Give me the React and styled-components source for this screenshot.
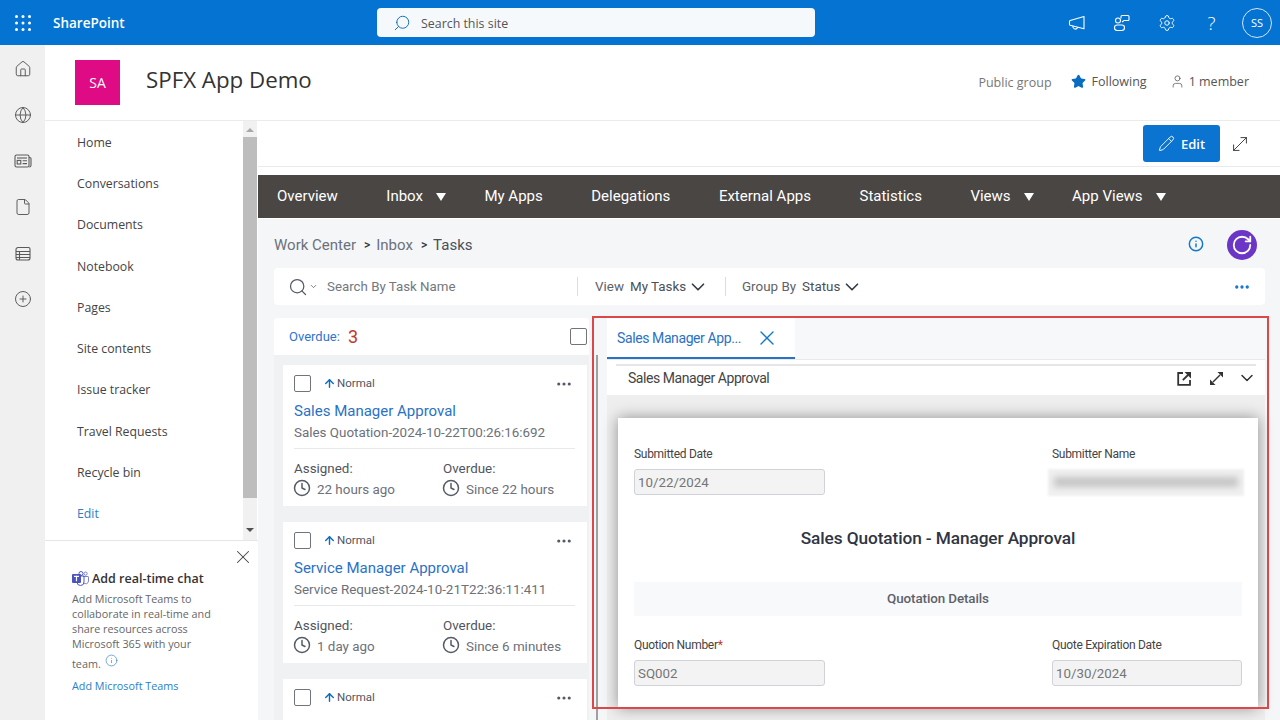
import React from 'react'
import styled, { createGlobalStyle } from 'styled-components'
import {
  Home, Globe, File, CirclePlus, Search, Settings, Star, User,
  Pencil, MoveDiagonal, X, Info, RotateCw, ChevronDown, ArrowUp, Clock, MoreHorizontal,
} from 'lucide-react'

const SP_FONT = `"Open Sans", "Noto Sans", sans-serif`
const APP_FONT = `Roboto, "Liberation Sans", sans-serif`

const navLinks = ['Home', 'Conversations', 'Documents', 'Notebook', 'Pages', 'Site contents', 'Issue tracker', 'Travel Requests', 'Recycle bin']
const menuItems = [
  { label: 'Overview' },
  { label: 'Inbox', caret: true },
  { label: 'My Apps' },
  { label: 'Delegations' },
  { label: 'External Apps' },
  { label: 'Statistics' },
  { label: 'Views', caret: true },
  { label: 'App Views', caret: true },
]
const tasks = [
  { title: 'Sales Manager Approval', sub: 'Sales Quotation-2024-10-22T00:26:16:692', assigned: '22 hours ago', overdue: 'Since 22 hours' },
  { title: 'Service Manager Approval', sub: 'Service Request-2024-10-21T22:36:11:411', assigned: '1 day ago', overdue: 'Since 6 minutes' },
  { title: null },
]

const Waffle = () => (
  <svg width="16" height="16" viewBox="0 0 16 16" fill="#fff">
    {[1.5, 8, 14.5].map(y => [1.5, 8, 14.5].map(x => <circle key={`${x}-${y}`} cx={x} cy={y} r="1.5" />))}
  </svg>
)

const Horn = () => (
  <svg width="18" height="18" viewBox="0 0 18 18" fill="none" stroke="#fff" strokeWidth="1.1" strokeLinejoin="round">
    <path d="M16 2.5v12.2L2.2 11.2a1 1 0 0 1-.7-1V7.6a1 1 0 0 1 .7-1z" />
    <path d="M5 12a2.4 2.4 0 0 0 4.7 1.2" />
  </svg>
)

const ChatBubbles = () => (
  <svg width="18" height="18" viewBox="0 0 18 18" fill="none" stroke="#fff" strokeWidth="1.1">
    <circle cx="5" cy="6.5" r="2.5" />
    <path d="M8 4.5V2.5a1 1 0 0 1 1-1h6a1 1 0 0 1 1 1v3a1 1 0 0 1-1 1h-4l-2 1.5" />
    <rect x="1.5" y="11" width="10" height="5.5" rx="2.7" />
  </svg>
)

const NewsCard = () => (
  <svg width="18" height="18" viewBox="0 0 18 18" fill="none" stroke="#5a5a5a" strokeWidth="1.1">
    <rect x="1" y="3" width="14" height="12" rx="1.6" />
    <path d="M15 5.5h.7a1.3 1.3 0 0 1 1.3 1.3v6.4a1.8 1.8 0 0 1-1.8 1.8" />
    <path d="M3 6h10" />
    <rect x="3.2" y="8.4" width="3.6" height="3.6" />
    <path d="M8.6 8.8h4.4M8.6 11.6h4.4" />
  </svg>
)

const ListTable = () => (
  <svg width="18" height="18" viewBox="0 0 18 18" fill="none" stroke="#5a5a5a" strokeWidth="1.1">
    <path d="M4 3.5 h10.5a1.5 1.5 0 0 1 1.5 1.5v9a2 2 0 0 1-2 2H4a2 2 0 0 1-2-2V5.5a2 2 0 0 1 2-2z" />
    <path d="M2 7.5h14M2 10.5h14M2 13.5h14M5.5 7.5V16" />
  </svg>
)

const OpenOut = () => (
  <svg width="15" height="15" viewBox="0 0 15 15" fill="none" stroke="#333" strokeWidth="1.8">
    <path d="M6 2H1.2v11.8H13V9" />
    <path d="M5.8 9.2 11 4" />
    <path d="M7.5 1h6.5v6.5z" fill="#333" stroke="none" />
  </svg>
)

const ExpandArrows = () => (
  <svg width="15" height="15" viewBox="0 0 15 15" fill="none" stroke="#333" strokeWidth="1.5">
    <path d="M4 11 11 4" />
    <path d="M8.5 1H14v5.5z" fill="#333" stroke="none" />
    <path d="M1 8.5V14h5.5z" fill="#333" stroke="none" />
  </svg>
)

const TeamsLogo = () => (
  <svg width="17" height="15" viewBox="0 0 17 15">
    <circle cx="13.6" cy="2.6" r="1.6" fill="none" stroke="#7b83c9" strokeWidth="1" />
    <path d="M11 5.5h5a.6.6 0 0 1 .5.6v4a2.8 2.8 0 0 1-5 1.6" fill="none" stroke="#7b83c9" strokeWidth="1" />
    <circle cx="9" cy="2.5" r="2" fill="none" stroke="#5059c9" strokeWidth="1" />
    <path d="M5 5h7v6a3.5 3.5 0 0 1-7 0z" fill="none" stroke="#5059c9" strokeWidth="1" />
    <rect x="0" y="3" width="9" height="9" rx="1" fill="#4b53bc" />
    <rect x="2" y="4.8" width="5" height="1.2" fill="#fff" />
    <rect x="3.9" y="4.8" width="1.2" height="5.4" fill="#fff" />
  </svg>
)

const App = () => {
  return (
    <Page>
      <GlobalStyle />
      <TopBar>
        <WaffleCell><Waffle /></WaffleCell>
        <Brand>SharePoint</Brand>
        <SearchBar>
          <FlippedIcon><Search size={18} strokeWidth={1.25} color="#0a6cc0" /></FlippedIcon>
          <SearchText>Search this site</SearchText>
        </SearchBar>
        <TopIcons>
          <TopIcon><Horn /></TopIcon>
          <TopIcon><ChatBubbles /></TopIcon>
          <TopIcon><Settings size={18} strokeWidth={1.25} color="#fff" /></TopIcon>
          <TopIcon><HelpMark>?</HelpMark></TopIcon>
          <Avatar>SS</Avatar>
        </TopIcons>
      </TopBar>

      <Body>
        <Rail>
          <Home size={18} strokeWidth={1.3} />
          <Globe size={18} strokeWidth={1.3} />
          <NewsCard />
          <File size={18} strokeWidth={1.3} />
          <ListTable />
          <CirclePlus size={18} strokeWidth={1.3} />
        </Rail>

        <Site>
          <SiteHeader>
            <SiteLogo>SA</SiteLogo>
            <SiteTitle>SPFX App Demo</SiteTitle>
            <SiteMeta>
              <PublicGroup>Public group</PublicGroup>
              <MetaItem><Star size={15} fill="#0a6cc0" color="#0a6cc0" />Following</MetaItem>
              <MetaItem $gap={4}><User size={15} strokeWidth={1.2} />1 member</MetaItem>
            </SiteMeta>
          </SiteHeader>

          <Columns>
            <SideNav>
              <NavScroll>
                <NavList>
                  {navLinks.map(link => <NavLink key={link}>{link}</NavLink>)}
                  <NavLink $edit>Edit</NavLink>
                </NavList>
                <ScrollBar>
                  <ArrowUpMark />
                  <ScrollThumb />
                  <ArrowDownMark />
                </ScrollBar>
              </NavScroll>
              <Promo>
                <PromoClose><X size={22} strokeWidth={1.1} /></PromoClose>
                <PromoTitle><TeamsLogo />Add real-time chat</PromoTitle>
                <PromoText>
                  Add Microsoft Teams to collaborate in real-time and share resources across Microsoft 365 with your{' '}
                  <PromoLast>team.<Info size={13} strokeWidth={1.2} color="#2a7fc9" /></PromoLast>
                </PromoText>
                <PromoLink>Add Microsoft Teams</PromoLink>
              </Promo>
            </SideNav>

            <Main>
              <EditBar>
                <EditButton><Pencil size={17} strokeWidth={1.3} />Edit</EditButton>
                <MoveDiagonal size={22} strokeWidth={1} color="#333" />
              </EditBar>

              <MenuBar>
                {menuItems.map(item => (
                  <MenuItem key={item.label}>
                    {item.label}
                    {item.caret && <Caret />}
                  </MenuItem>
                ))}
              </MenuBar>

              <Content>
                <CrumbRow>
                  <Crumbs>
                    <span>Work Center</span><Sep>&gt;</Sep><span>Inbox</span><Sep>&gt;</Sep><CrumbNow>Tasks</CrumbNow>
                  </Crumbs>
                  <Info size={16} strokeWidth={2.2} color="#1478c8" />
                  <RefreshButton><RotateCw size={22} strokeWidth={2} color="#fff" /></RefreshButton>
                </CrumbRow>

                <Toolbar>
                  <SearchCell>
                    <Search size={20} strokeWidth={1.5} color="#555b66" />
                    <ChevronDown size={9} strokeWidth={2} color="#555b66" />
                    <SearchHint>Search By Task Name</SearchHint>
                  </SearchCell>
                  <FilterCell $width={147}>
                    <FilterName>View</FilterName>
                    <FilterValue>My Tasks</FilterValue>
                    <ChevronDown size={22} strokeWidth={1.8} color="#333a45" />
                  </FilterCell>
                  <FilterCell $width={150}>
                    <FilterName>Group By</FilterName>
                    <FilterValue>Status</FilterValue>
                    <ChevronDown size={22} strokeWidth={1.8} color="#333a45" />
                  </FilterCell>
                  <ToolbarDots><MoreHorizontal size={18} strokeWidth={2.4} color="#1478c8" /></ToolbarDots>
                </Toolbar>

                <Panes>
                  <TaskPane>
                    <TaskHead>
                      <OverdueLabel>Overdue:</OverdueLabel>
                      <OverdueCount>3</OverdueCount>
                      <HeadCheck />
                    </TaskHead>
                    <TaskList>
                      {tasks.map((task, i) => (
                        <TaskCard key={i}>
                          <CardTop>
                            <Check />
                            <ArrowUp size={13} strokeWidth={2.6} color="#0a6cc0" />
                            <Priority>Normal</Priority>
                            <CardDots><MoreHorizontal size={18} strokeWidth={2.2} color="#555b66" /></CardDots>
                          </CardTop>
                          {task.title && (
                            <>
                              <CardTitle>{task.title}</CardTitle>
                              <CardSub>{task.sub}</CardSub>
                              <CardRule />
                              <CardTimes>
                                <TimeCol>
                                  <TimeLabel>Assigned:</TimeLabel>
                                  <TimeValue><Clock size={18} strokeWidth={2} color="#555b66" />{task.assigned}</TimeValue>
                                </TimeCol>
                                <TimeCol>
                                  <TimeLabel>Overdue:</TimeLabel>
                                  <TimeValue><Clock size={18} strokeWidth={2} color="#555b66" />{task.overdue}</TimeValue>
                                </TimeCol>
                              </CardTimes>
                            </>
                          )}
                        </TaskCard>
                      ))}
                    </TaskList>
                  </TaskPane>

                  <ScrollLine />

                  <DetailPane>
                    <TabStrip>
                      <Tab>
                        <TabLabel>Sales Manager App...</TabLabel>
                        <X size={24} strokeWidth={1.4} color="#1478c8" />
                      </Tab>
                    </TabStrip>
                    <PanelHeader>
                      <PanelRow>
                        <PanelTitle>Sales Manager Approval</PanelTitle>
                        <PanelIcons>
                          <OpenOut />
                          <ExpandArrows />
                          <ChevronDown size={20} strokeWidth={1.8} color="#333" />
                        </PanelIcons>
                      </PanelRow>
                    </PanelHeader>
                    <FormArea>
                      <FormCard>
                        <FieldRow>
                          <Field>
                            <FieldLabel>Submitted Date</FieldLabel>
                            <FieldBox>10/22/2024</FieldBox>
                          </Field>
                          <Field>
                            <FieldLabel>Submitter Name</FieldLabel>
                            <Redacted><RedactedInk /></Redacted>
                          </Field>
                        </FieldRow>
                        <FormTitle>Sales Quotation - Manager Approval</FormTitle>
                        <SectionBand>Quotation Details</SectionBand>
                        <FieldRow $second>
                          <Field>
                            <FieldLabel>Quotion Number<Required>*</Required></FieldLabel>
                            <FieldBox>SQ002</FieldBox>
                          </Field>
                          <Field>
                            <FieldLabel>Quote Expiration Date</FieldLabel>
                            <FieldBox>10/30/2024</FieldBox>
                          </Field>
                        </FieldRow>
                      </FormCard>
                    </FormArea>
                  </DetailPane>
                </Panes>
              </Content>
            </Main>
          </Columns>
        </Site>
      </Body>
      <Highlight />
    </Page>
  )
}

export default App

const GlobalStyle = createGlobalStyle`
  html, body {
    margin: 0;
    width: 1280px;
    height: 720px;
    overflow: hidden;
    background: #fff;
  }
  * { box-sizing: border-box; }
`
const Page = styled.div`
  position: relative;
  width: 1280px;
  height: 720px;
  overflow: hidden;
  display: flex;
  flex-direction: column;
  font-family: ${SP_FONT};
`
const TopBar = styled.header`
  height: 45px;
  flex: none;
  background: #0473d1;
  display: flex;
  align-items: center;
  color: #fff;
`
const WaffleCell = styled.div`
  width: 45px;
  display: flex;
  justify-content: center;
`
const Brand = styled.div`
  width: 332px;
  padding-left: 8px;
  font-size: 13.5px;
  font-weight: 600;
`
const SearchBar = styled.div`
  width: 438px;
  height: 29px;
  background: #f6f9fc;
  border-radius: 4px;
  display: flex;
  align-items: center;
  gap: 10px;
  padding-left: 16px;
  color: #555;
  font-size: 12.4px;
`
const SearchText = styled.span`
  margin-top: 2px;
`
const FlippedIcon = styled.span`
  display: flex;
  transform: scaleX(-1);
`
const TopIcons = styled.div`
  margin-left: auto;
  display: flex;
  align-items: center;
  padding-right: 8px;
`
const TopIcon = styled.div`
  width: 45px;
  display: flex;
  justify-content: center;
`
const HelpMark = styled.span`
  font-size: 19px;
  font-weight: 300;
  line-height: 18px;
`
const Avatar = styled.div`
  width: 30px;
  height: 30px;
  margin-left: 8px;
  border: 1px solid #d5e6f6;
  border-radius: 50%;
  display: flex;
  align-items: center;
  justify-content: center;
  font-size: 11px;
`
const Body = styled.div`
  flex: 1;
  min-height: 0;
  display: flex;
`
const Rail = styled.nav`
  width: 45px;
  flex: none;
  background: #f0f0f0;
  color: #5a5a5a;
  display: flex;
  flex-direction: column;
  align-items: center;
  gap: 28.1px;
  padding-top: 15px;
`
const Site = styled.div`
  flex: 1;
  min-width: 0;
  display: flex;
  flex-direction: column;
`
const SiteHeader = styled.div`
  height: 76px;
  flex: none;
  border-bottom: 1px solid #ebebeb;
  padding: 15px 31px 0 30px;
  display: flex;
  align-items: flex-start;
`
const SiteLogo = styled.div`
  width: 45px;
  height: 45px;
  background: #de0b85;
  color: #fff;
  font-size: 14px;
  display: flex;
  align-items: center;
  justify-content: center;
`
const SiteTitle = styled.div`
  margin: 4px 0 0 26px;
  font-size: 22.3px;
  font-weight: 500;
  color: #333;
`
const SiteMeta = styled.div`
  margin-left: auto;
  padding-top: 11px;
  display: flex;
  align-items: center;
  font-size: 12.5px;
  color: #555;
`
const PublicGroup = styled.span`
  color: #777;
  margin-top: 3px;
`
const MetaItem = styled.span`
  display: flex;
  align-items: center;
  gap: ${p => p.$gap || 6}px;
  margin-left: 19px;

  & + & { margin-left: 23px; }
`
const Columns = styled.div`
  flex: 1;
  min-height: 0;
  display: flex;
`
const SideNav = styled.aside`
  width: 213px;
  flex: none;
  display: flex;
  flex-direction: column;
`
const NavScroll = styled.div`
  height: 420px;
  flex: none;
  border-bottom: 1px solid #e6e6e6;
  display: flex;
`
const NavList = styled.div`
  flex: 1;
  padding: 0.5px 0 0 32px;
`
const NavLink = styled.div`
  height: 41.3px;
  display: flex;
  align-items: center;
  font-size: 12.3px;
  color: ${p => (p.$edit ? '#2a7fc9' : '#444')};
`
const ScrollBar = styled.div`
  width: 14px;
  margin-right: 1px;
  background: #f1f1f1;
  display: flex;
  flex-direction: column;
  align-items: center;
  padding-top: 7px;
`
const ArrowUpMark = styled.div`
  border: 4px solid transparent;
  border-top: 0;
  border-bottom: 4px solid #a8a8a8;
`
const ScrollThumb = styled.div`
  width: 100%;
  height: 361px;
  margin: 5px 0 30px;
  background: #bdbdbd;
`
const ArrowDownMark = styled.div`
  border: 4px solid transparent;
  border-bottom: 0;
  border-top: 4px solid #505050;
`
const Promo = styled.div`
  position: relative;
  flex: 1;
  padding: 29px 40px 0 27px;
`
const PromoClose = styled.div`
  position: absolute;
  top: 5px;
  right: 4px;
  color: #444;
  display: flex;
`
const PromoTitle = styled.div`
  display: flex;
  align-items: center;
  gap: 3px;
  font-size: 12.5px;
  font-weight: 600;
  white-space: nowrap;
  color: #333;
  margin-bottom: 4px;
`
const PromoText = styled.div`
  font-size: 10.8px;
  line-height: 15px;
  color: #666;
`
const PromoLast = styled.span`
  display: inline-block;
  margin-top: 3px;

  svg {
    margin-left: 4px;
    vertical-align: 1px;
  }
`
const PromoLink = styled.div`
  margin-top: 7px;
  font-size: 10.8px;
  color: #2a7fc9;
`
const Main = styled.main`
  flex: 1;
  min-width: 0;
  display: flex;
  flex-direction: column;
`
const EditBar = styled.div`
  height: 46px;
  flex: none;
  border-bottom: 1px solid #ebebeb;
  display: flex;
  align-items: center;
  justify-content: flex-end;
  gap: 9px;
  padding-right: 29px;
`
const EditButton = styled.div`
  width: 77px;
  height: 37px;
  background: #0a74d0;
  border-radius: 3px;
  color: #fff;
  font-size: 13px;
  font-weight: 600;
  display: flex;
  align-items: center;
  justify-content: center;
  gap: 6px;
`
const MenuBar = styled.div`
  height: 44px;
  flex: none;
  margin-top: 8px;
  background: #4a4644;
  border-bottom: 1px solid #fff;
  padding: 0 0 2px 19px;
  display: flex;
  align-items: center;
  gap: 48.5px;
  font-family: ${APP_FONT};
  font-size: 15px;
  color: #fff;
`
const MenuItem = styled.div`
  display: flex;
  align-items: center;
`
const Caret = styled.span`
  margin: 2px -10px 0 13px;
  border-left: 5px solid transparent;
  border-right: 5px solid transparent;
  border-top: 8px solid #fff;
`
const Content = styled.div`
  flex: 1;
  min-height: 0;
  background: #f5f6f8;
  padding: 0 15px 0 16px;
  font-family: ${APP_FONT};
  display: flex;
  flex-direction: column;
`
const CrumbRow = styled.div`
  height: 49px;
  flex: none;
  display: flex;
  align-items: center;
  padding-right: 8px;
  gap: 23px;
`
const Crumbs = styled.div`
  flex: 1;
  margin-top: 2px;
  display: flex;
  align-items: center;
  font-size: 15px;
  color: #6c717a;
`
const Sep = styled.span`
  margin: 0 6px 0 8px;
  font-size: 12px;
  font-weight: 500;
  color: #333a45;
`
const CrumbNow = styled.span`
  color: #4a4f58;
`
const RefreshButton = styled.div`
  width: 30px;
  height: 30px;
  margin-top: 3px;
  border-radius: 50%;
  background: #6b35c6;
  display: flex;
  align-items: center;
  justify-content: center;
`
const Toolbar = styled.div`
  height: 37px;
  flex: none;
  background: #fff;
  border-radius: 4px;
  display: flex;
  align-items: center;
  margin-bottom: 13px;
`
const SearchCell = styled.div`
  width: 304px;
  height: 19px;
  border-right: 1px solid #dcdde0;
  display: flex;
  align-items: center;
  padding-left: 14px;
  gap: 1px;
`
const SearchHint = styled.span`
  margin-left: 8px;
  font-size: 13.3px;
  color: #73777f;
`
const FilterCell = styled.div`
  width: ${p => p.$width}px;
  height: 19px;
  padding-left: 17px;
  display: flex;
  align-items: center;
  gap: 6px;
  font-size: 13.4px;

  svg { margin-left: -5px; }

  & + & {
    border-left: 1px solid #dcdde0;
    padding-left: 16px;
  }
`
const FilterName = styled.span`
  color: #5d626b;
`
const FilterValue = styled.span`
  color: #4a4f58;
`
const ToolbarDots = styled.div`
  margin-left: auto;
  padding-right: 14px;
  display: flex;
`
const Panes = styled.div`
  flex: 1;
  min-height: 0;
  display: flex;
`
const TaskPane = styled.section`
  width: 315px;
  flex: none;
  display: flex;
  flex-direction: column;
`
const TaskHead = styled.div`
  height: 37px;
  flex: none;
  background: #fff;
  border-radius: 4px 4px 0 0;
  padding: 0 2px 0 15px;
  display: flex;
  align-items: center;
`
const OverdueLabel = styled.span`
  font-size: 13px;
  color: #2f74d0;
`
const OverdueCount = styled.span`
  margin-left: 8px;
  font-size: 18px;
  color: #c0392b;
`
const Check = styled.span`
  width: 17px;
  height: 17px;
  flex: none;
  background: #fff;
  border: 1px solid #70747c;
  border-radius: 2px;
`
const HeadCheck = styled(Check)`
  margin-left: auto;
`
const TaskList = styled.div`
  flex: 1;
  min-height: 0;
  overflow: hidden;
  background: #f0f1f3;
  padding: 10px 2px 0 9px;
  display: flex;
  flex-direction: column;
  gap: 16px;
`
const TaskCard = styled.article`
  height: 141px;
  flex: none;
  background: #fff;
  padding: 10px 14px 0 11px;
`
const CardTop = styled.div`
  height: 17px;
  display: flex;
  align-items: center;

  & > svg {
    margin-left: 12px;
    flex: none;
  }
`
const Priority = styled.span`
  margin: -1px 0 0 1px;
  font-size: 11.5px;
  color: #50555e;
`
const CardDots = styled.span`
  margin-left: auto;
  display: flex;
`
const CardTitle = styled.div`
  height: 20px;
  margin-top: 9px;
  font-size: 15px;
  line-height: 20px;
  color: #2a72c4;
`
const CardSub = styled.div`
  height: 18px;
  margin-top: 3px;
  font-size: 13.4px;
  line-height: 18px;
  color: #6c717a;
`
const CardRule = styled.div`
  height: 1px;
  margin-top: 6px;
  margin-right: -2px;
  background: #e8e9eb;
`
const CardTimes = styled.div`
  margin-top: 11px;
  display: grid;
  grid-template-columns: 149px 1fr;
`
const TimeCol = styled.div`
  display: flex;
  flex-direction: column;
  gap: 2px;
`
const TimeLabel = styled.div`
  height: 18px;
  font-size: 13.4px;
  line-height: 18px;
  color: #50555e;
`
const TimeValue = styled.div`
  height: 18px;
  display: flex;
  align-items: center;
  gap: 6px;
  font-size: 13.4px;
  color: #6c717a;

  svg {
    margin: -2px 0 0 -1px;
    flex: none;
  }
`
const ScrollLine = styled.div`
  width: 2px;
  flex: none;
  margin: 37px 9px 0 7px;
  background: #a0a0a0;
`
const DetailPane = styled.section`
  flex: 1;
  min-width: 0;
  display: flex;
  flex-direction: column;
`
const TabStrip = styled.div`
  height: 42px;
  flex: none;
  background: #f7f8f9;
  display: flex;
  border-bottom: 1px solid #e8e9eb;
`
const Tab = styled.div`
  width: 188px;
  height: 41px;
  background: #fff;
  border-bottom: 2px solid #2a72c4;
  padding: 0 16px 0 10px;
  display: flex;
  align-items: center;
  justify-content: space-between;
`
const TabLabel = styled.span`
  font-size: 14px;
  letter-spacing: -0.4px;
  color: #2a72c4;
`
const PanelHeader = styled.div`
  height: 35px;
  flex: none;
  background: #fff;
  padding: 4px 9px 0;
`
const PanelRow = styled.div`
  height: 30px;
  border-top: 2px solid #e6e6e6;
  padding: 0 0 4px 12px;
  display: flex;
  align-items: center;
  justify-content: space-between;
`
const PanelTitle = styled.span`
  font-size: 14px;
  letter-spacing: -0.45px;
  color: #444;
`
const PanelIcons = styled.div`
  display: flex;
  align-items: center;
  gap: 17px;

  svg:last-child { margin: 0 -1px 0 -3.5px; }
`
const FormArea = styled.div`
  flex: 1;
  min-height: 0;
  background: #eeeeee;
  padding: 23px 7px 0 11px;
`
const FormCard = styled.div`
  height: 290px;
  background: #fff;
  box-shadow: 0 0 14px rgba(0, 0, 0, 0.4);
  padding: 28px 16px 0;
`
const FieldRow = styled.div`
  display: flex;
  justify-content: space-between;
  margin-top: ${p => (p.$second ? 21 : 0)}px;
`
const Field = styled.div`
  width: 190px;

  &:first-child { width: 191px; }
`
const FieldLabel = styled.div`
  height: 16px;
  margin-bottom: 7px;
  font-size: 12px;
  line-height: 16px;
  letter-spacing: -0.3px;
  color: #444;
`
const Required = styled.span`
  color: #c0392b;
`
const FieldBox = styled.div`
  height: 26px;
  background: #f3f3f3;
  border: 1px solid #cfd2d8;
  border-radius: 3px;
  padding-left: 3px;
  display: flex;
  align-items: center;
  font-size: 13.3px;
  color: #757575;
`
const Redacted = styled.div`
  height: 27px;
  margin-left: -4px;
  width: 196px;
  background: #f0f0f0;
  filter: blur(1px);
  overflow: hidden;
  padding: 8px 6px;
`
const RedactedInk = styled.div`
  height: 10px;
  background: #c4c4c4;
  filter: blur(3px);
`
const FormTitle = styled.div`
  height: 24px;
  margin-top: 30px;
  font-size: 17.25px;
  font-weight: 500;
  line-height: 24px;
  letter-spacing: -0.1px;
  text-align: center;
  color: #2f3542;
`
const SectionBand = styled.div`
  height: 34px;
  margin-top: 32px;
  padding-bottom: 2px;
  background: #f8f9fa;
  display: flex;
  align-items: center;
  justify-content: center;
  font-size: 13.4px;
  font-weight: 500;
  letter-spacing: -0.1px;
  color: #5d626b;
`
// the red annotation drawn over the screenshot
const Highlight = styled.div`
  position: absolute;
  left: 592px;
  top: 316px;
  width: 677px;
  height: 393px;
  border: 2px solid #dc4848;
  pointer-events: none;
`
